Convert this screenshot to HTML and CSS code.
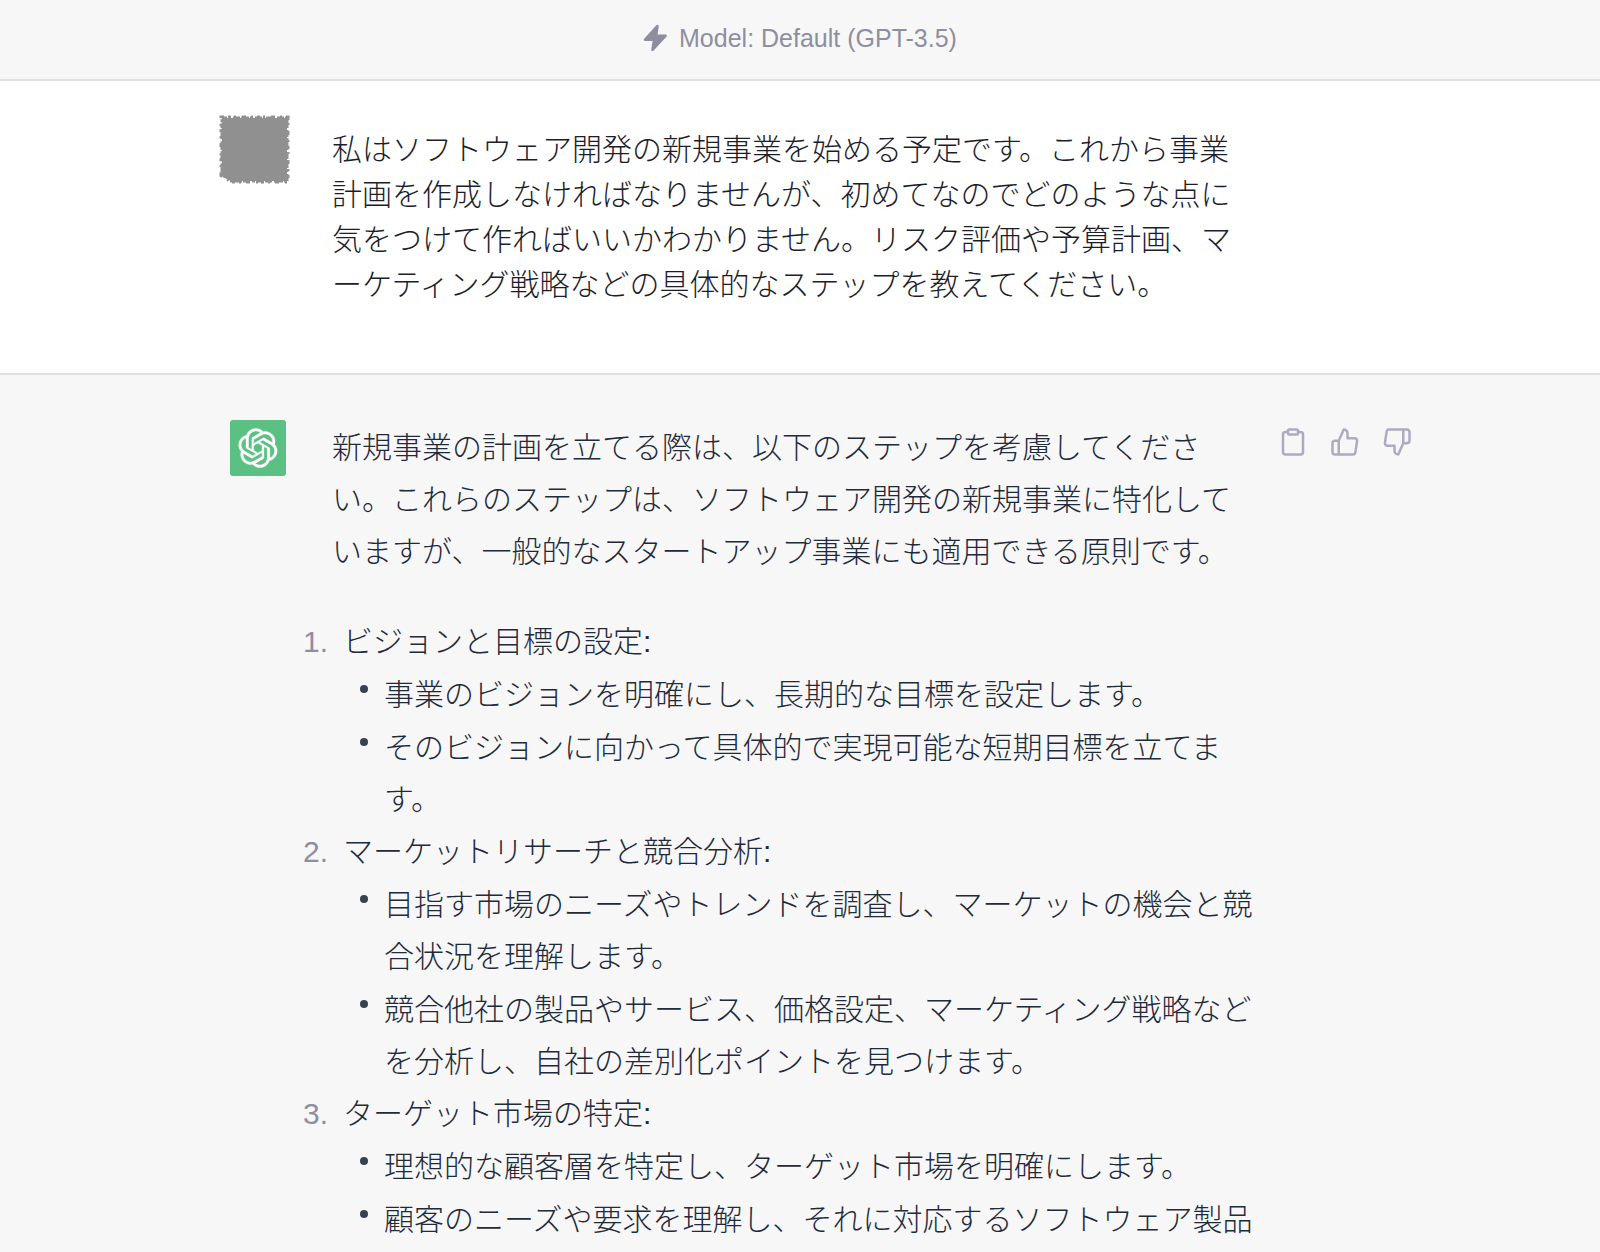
FILE: index.html
```html
<!DOCTYPE html>
<html lang="ja">
<head>
  <meta charset="UTF-8">
  <title>Chat</title>
  <meta name="viewport" content="width=device-width, initial-scale=1.0">
  <link rel="stylesheet" href="styles.css">
</head>
<body>

  <header class="model-bar">
    <svg class="bolt" viewBox="0 0 26 28" aria-hidden="true">
      <path d="M13.600 1 1.200 14.800C.3 15.800.7 17.200 2.200 17.200H10L8.600 25.600C8.300 27.600 9.900 28.200 11.100 26.900L24.400 12.600C25.300 11.600 24.900 10.400 23.500 10.400H15.200L16.300 2.100C16.500.2 14.800-.3 13.600 1z"/>
    </svg>
    <span>Model: Default (GPT-3.5)</span>
  </header>

  <main>
    <section class="message user">
      <svg class="user-avatar" viewBox="0 0 72 70" role="img" aria-label="User">
        <path d="M4 4H69V67H12L10 64 4 61z"/>
        <path class="rough" d="M4 4H69V67H12L10 64 4 61z" stroke-width="3" stroke-dasharray="5 1 3 2 7 1 2 1"/>
        <path class="rough" d="M4 4H69V67H12L10 64 4 61z" stroke-width="5" stroke-dasharray="2 4 3 3 2 6 4 5"/>
      </svg>
      <div class="text">
        <p>私はソフトウェア開発の新規事業を始める予定です。これから事業計画を作成しなければなりませんが、初めてなのでどのような点に気をつけて作ればいいかわかりません。リスク評価や予算計画、マーケティング戦略などの具体的なステップを教えてください。</p>
      </div>
    </section>

    <section class="message bot">
      <div class="bot-avatar">
        <svg viewBox="0 0 41 41" role="img" aria-label="ChatGPT">
          <path d="M37.5324 16.8707C37.9808 15.5241 38.1363 14.0974 37.9886 12.6859C37.8409 11.2744 37.3934 9.91076 36.676 8.68622C35.6126 6.83404 33.9882 5.3676 32.0373 4.4985C30.0864 3.62941 27.9098 3.40259 25.8215 3.85078C24.8796 2.7893 23.7219 1.94125 22.4257 1.36341C21.1295 0.785575 19.7249 0.491269 18.3058 0.500197C16.1708 0.495044 14.0893 1.16803 12.3614 2.42214C10.6335 3.67624 9.34853 5.44666 8.6917 7.47815C7.30085 7.76286 5.98686 8.3414 4.8377 9.17505C3.68854 10.0087 2.73073 11.0782 2.02839 12.312C0.956464 14.1591 0.498905 16.2988 0.721698 18.4228C0.944492 20.5467 1.83612 22.5449 3.268 24.1293C2.81966 25.4759 2.66413 26.9026 2.81182 28.3141C2.95951 29.7256 3.40701 31.0892 4.12437 32.3138C5.18791 34.1659 6.8123 35.6322 8.76321 36.5013C10.7141 37.3704 12.8907 37.5973 14.9789 37.1492C15.9208 38.2107 17.0786 39.0587 18.3747 39.6366C19.6709 40.2144 21.0755 40.5087 22.4946 40.4998C24.6307 40.5054 26.7133 39.8321 28.4418 38.5772C30.1704 37.3223 31.4556 35.5506 32.1119 33.5179C33.5027 33.2332 34.8167 32.6547 35.9659 31.821C37.115 30.9874 38.0728 29.9178 38.7752 28.684C39.8458 26.8371 40.3023 24.6979 40.0789 22.5748C39.8556 20.4517 38.9639 18.4544 37.5324 16.8707ZM22.4978 37.8849C20.7443 37.8874 19.0459 37.2733 17.6994 36.1501C17.7601 36.117 17.8666 36.0586 17.936 36.0161L25.9004 31.4156C26.1003 31.3019 26.2663 31.137 26.3813 30.9378C26.4964 30.7386 26.5563 30.5124 26.5549 30.2825V19.0542L29.9213 20.998C29.9389 21.0068 29.9541 21.0198 29.9656 21.0359C29.977 21.052 29.9842 21.0707 29.9867 21.0902V30.3889C29.9842 32.375 29.1946 34.2791 27.7909 35.6841C26.3872 37.0892 24.4838 37.8806 22.4978 37.8849ZM6.39227 31.0064C5.51397 29.4888 5.19742 27.7107 5.49804 25.9832C5.55718 26.0187 5.66048 26.0818 5.73461 26.1244L13.699 30.7248C13.8975 30.8408 14.1233 30.902 14.3532 30.902C14.583 30.902 14.8088 30.8408 15.0073 30.7248L24.731 25.1103V28.9979C24.7321 29.0177 24.7283 29.0376 24.7199 29.0556C24.7115 29.0736 24.6988 29.0893 24.6829 29.1012L16.6317 33.7497C14.9096 34.7416 12.8643 35.0097 10.9447 34.4954C9.02506 33.9811 7.38785 32.7263 6.39227 31.0064ZM4.29707 13.6194C5.17156 12.0998 6.55279 10.9364 8.19885 10.3327C8.19885 10.4013 8.19491 10.5228 8.19491 10.6071V19.808C8.19351 20.0378 8.25334 20.2638 8.36823 20.4629C8.48312 20.6619 8.64893 20.8267 8.84863 20.9404L18.5723 26.5542L15.206 28.4979C15.1894 28.5089 15.1703 28.5155 15.1505 28.5173C15.1307 28.5191 15.1107 28.516 15.0924 28.5082L7.04046 23.8557C5.32135 22.8601 4.06716 21.2235 3.55289 19.3046C3.03862 17.3858 3.30624 15.3413 4.29707 13.6194ZM31.955 20.0556L22.2312 14.4411L25.5976 12.4981C25.6142 12.4872 25.6333 12.4805 25.6531 12.4787C25.6729 12.4769 25.6928 12.4801 25.7111 12.4879L33.7631 17.1364C34.9967 17.849 36.0017 18.8982 36.6606 20.1613C37.3194 21.4244 37.6047 22.849 37.4832 24.2684C37.3617 25.6878 36.8382 27.0432 35.9743 28.1759C35.1103 29.3086 33.9415 30.1717 32.6047 30.6641C32.6047 30.5947 32.6047 30.4733 32.6047 30.3889V21.188C32.6066 20.9586 32.5474 20.7328 32.4332 20.5338C32.319 20.3348 32.154 20.1698 31.955 20.0556ZM35.3055 15.0128C35.2464 14.9765 35.1431 14.9142 35.069 14.8717L27.1045 10.2712C26.906 10.1554 26.6803 10.0943 26.4504 10.0943C26.2206 10.0943 25.9948 10.1554 25.7963 10.2712L16.0726 15.8858V11.9982C16.0715 11.9783 16.0753 11.9585 16.0837 11.9405C16.0921 11.9225 16.1048 11.9068 16.1207 11.8949L24.1719 7.25025C25.4053 6.53903 26.8158 6.19376 28.2383 6.25482C29.6608 6.31589 31.0364 6.78077 32.2044 7.59508C33.3723 8.40939 34.2842 9.53945 34.8334 10.8531C35.3826 12.1667 35.5464 13.6095 35.3055 15.0128ZM14.2424 21.9419L10.8752 19.9981C10.8576 19.9893 10.8423 19.9763 10.8309 19.9602C10.8195 19.9441 10.8122 19.9254 10.8098 19.9058V10.6071C10.8107 9.18295 11.2173 7.78848 11.9819 6.58696C12.7466 5.38544 13.8377 4.42659 15.1275 3.82264C16.4173 3.21869 17.8524 2.99464 19.2649 3.1767C20.6775 3.35876 22.0089 3.93941 23.1034 4.85067C23.0427 4.88379 22.937 4.94215 22.8668 4.98473L14.9024 9.58517C14.7025 9.69878 14.5366 9.86356 14.4215 10.0626C14.3065 10.2616 14.2466 10.4877 14.2479 10.7175L14.2424 21.9419ZM16.071 17.9991L20.4018 15.4978L24.7325 17.9975V22.9985L20.4018 25.4983L16.071 22.9985V17.9991Z"/>
        </svg>
      </div>
      <div class="text">
        <p>新規事業の計画を立てる際は、以下のステップを考慮してください。これらのステップは、ソフトウェア開発の新規事業に特化していますが、一般的なスタートアップ事業にも適用できる原則です。</p>
        <ol class="steps">
          <li>
            <div>
              <p>ビジョンと目標の設定:</p>
              <ul>
                <li><p>事業のビジョンを明確にし、長期的な目標を設定します。</p></li>
                <li><p>そのビジョンに向かって具体的で実現可能な短期目標を立てます。</p></li>
              </ul>
            </div>
          </li>
          <li>
            <div>
              <p>マーケットリサーチと競合分析:</p>
              <ul>
                <li><p>目指す市場のニーズやトレンドを調査し、マーケットの機会と競合状況を理解します。</p></li>
                <li><p>競合他社の製品やサービス、価格設定、マーケティング戦略などを分析し、自社の差別化ポイントを見つけます。</p></li>
              </ul>
            </div>
          </li>
          <li>
            <div>
              <p>ターゲット市場の特定:</p>
              <ul>
                <li><p>理想的な顧客層を特定し、ターゲット市場を明確にします。</p></li>
                <li><p>顧客のニーズや要求を理解し、それに対応するソフトウェア製品</p></li>
              </ul>
            </div>
          </li>
        </ol>
      </div>
      <div class="actions">
        <button type="button" aria-label="Copy">
          <svg viewBox="0 0 24 24"><path d="M16 4h2a2 2 0 0 1 2 2v14a2 2 0 0 1-2 2H6a2 2 0 0 1-2-2V6a2 2 0 0 1 2-2h2"/><rect x="8" y="2" width="8" height="4" rx="1"/></svg>
        </button>
        <button type="button" aria-label="Good response">
          <svg viewBox="0 0 24 24"><path d="M14 9V5a3 3 0 0 0-3-3l-4 9v11h11.280a2 2 0 0 0 2-1.700l1.380-9a2 2 0 0 0-2-2.300zM7 22H4a2 2 0 0 1-2-2v-7a2 2 0 0 1 2-2h3"/></svg>
        </button>
        <button type="button" aria-label="Bad response">
          <svg viewBox="0 0 24 24"><path d="M10 15v4a3 3 0 0 0 3 3l4-9V2H5.720a2 2 0 0 0-2 1.700l-1.380 9a2 2 0 0 0 2 2.300zM17 2h2.670A2.310 2.310 0 0 1 22 4v7a2.310 2.310 0 0 1-2.330 2H17"/></svg>
        </button>
      </div>
    </section>
  </main>

</body>
</html>
```

FILE: styles.css
```css
* {
  box-sizing: border-box;
}

body {
  margin: 0;
  background: #f7f7f8;
  color: #1c1d2b;
  font-family: "Liberation Sans", "Noto Sans CJK JP", sans-serif;
  font-size: 30px;
  font-weight: 300;
  overflow: hidden;
}

p, ol, ul {
  margin: 0;
  padding: 0;
}

.model-bar {
  display: flex;
  align-items: center;
  justify-content: center;
  gap: 11px;
  height: 81px;
  padding-bottom: 3px;
  border-bottom: 2px solid #e0e0e2;
  color: #8e8ea0;
  font-size: 25px;
}

.bolt {
  width: 25px;
  height: 28px;
  fill: #8e8ea0;
}

.message {
  display: flex;
  align-items: flex-start;
  padding-left: 218px;
  padding-right: 188px;
}

.text {
  flex: 1;
  min-width: 0;
}

/* user */

.user {
  padding-top: 33px;
  padding-bottom: 66px;
  padding-right: 343px;
  background: #fff;
  border-bottom: 2px solid #e0e0e2;
  line-height: 45px;
}

.user .text {
  padding-top: 13px;
}

.user-avatar {
  width: 72px;
  height: 70px;
  margin-right: 42px;
  fill: #909090;
}

.user-avatar .rough {
  fill: none;
  stroke: #909090;
}

/* answer */

.bot {
  padding-top: 45px;
  color: #1f2a3a;
  line-height: 52px;
}

.bot .text {
  padding-top: 2px;
}

.bot-avatar {
  display: flex;
  align-items: center;
  justify-content: center;
  width: 56px;
  height: 56px;
  margin-left: 12px;
  margin-right: 46px;
  border-radius: 3px;
  background: #5bc083;
}

.bot-avatar svg {
  width: 40px;
  height: 40px;
  fill: #fff;
  stroke: #fff;
  stroke-width: .4;
}

.steps {
  margin-top: 38px;
  margin-left: -32px;
  list-style: none;
  counter-reset: step;
}

.steps > li {
  display: grid;
  grid-template-columns: 28px 1fr;
  gap: 15px;
  counter-increment: step;
}

.steps > li::before {
  content: counter(step) ".";
  justify-self: end;
  color: #8e8ea0;
}

.steps ul {
  list-style: none;
}

.steps ul li {
  display: grid;
  grid-template-columns: 8px 1fr;
  gap: 16px;
  margin-top: 1px;
  margin-left: 17px;
}

.steps ul li::before {
  content: "";
  width: 8px;
  height: 8px;
  margin-top: 16px;
  border-radius: 50%;
  background: #374151;
}

.actions {
  display: flex;
  gap: 22px;
  margin-left: 22px;
  padding-top: 7px;
}

.actions button {
  display: block;
  width: 30px;
  height: 30px;
  padding: 0;
  border: none;
  background: none;
  cursor: pointer;
}

.actions svg {
  display: block;
  width: 30px;
  height: 30px;
  fill: none;
  stroke: #acacbe;
  stroke-width: 2;
  stroke-linecap: round;
  stroke-linejoin: round;
}

.actions button:hover svg {
  stroke: #8e8ea0;
}
```
